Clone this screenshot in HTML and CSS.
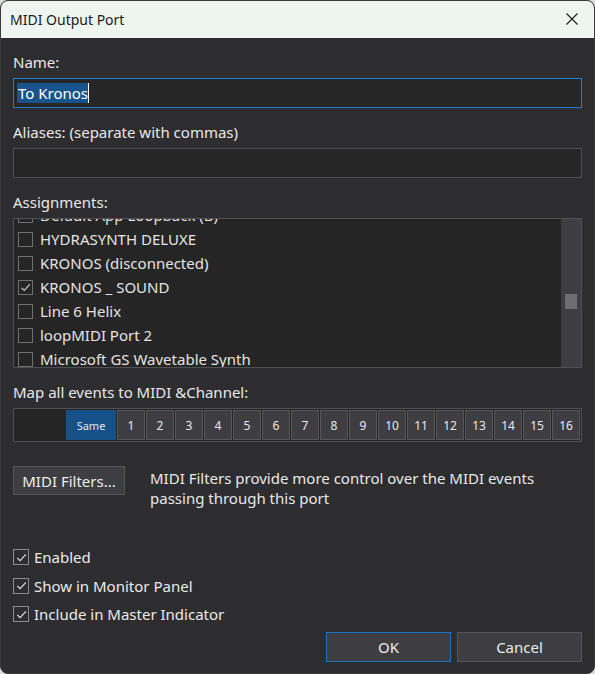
FILE: index.html
```html
<!DOCTYPE html>
<html>
<head>
<meta charset="utf-8">
<link rel="stylesheet" href="styles.css">
</head>
<body>
<div class="window">
  <div class="titlebar">
    <span class="title">MIDI Output Port</span>
    <svg class="close" width="12" height="12" viewBox="0 0 12 12"><path d="M0.5 0.5 L11.5 11.5 M11.5 0.5 L0.5 11.5" stroke="#1a1a1a" stroke-width="1.1" fill="none"/></svg>
  </div>
  <div class="content">
    <div class="label l-name">Name:</div>
    <div class="input focused"><span class="sel">To Kronos</span><span class="caret"></span></div>

    <div class="label l-alias">Aliases: (separate with commas)</div>
    <div class="input"></div>

    <div class="label l-assign">Assignments:</div>
    <div class="listbox">
      <div class="list-view">
        <div class="list-inner">
          <div class="item"><span class="cb"></span>Default App Loopback (B)</div>
          <div class="item"><span class="cb"></span>HYDRASYNTH DELUXE</div>
          <div class="item"><span class="cb"></span>KRONOS (disconnected)</div>
          <div class="item"><span class="cb"><svg width="13" height="13" viewBox="0 0 13 13"><path d="M2.5 6.8 L5.2 9.4 L10.8 3.4" stroke="#d0d0d0" stroke-width="1.1" fill="none"/></svg></span>KRONOS _ SOUND</div>
          <div class="item"><span class="cb"></span>Line 6 Helix</div>
          <div class="item"><span class="cb"></span>loopMIDI Port 2</div>
          <div class="item"><span class="cb"></span>Microsoft GS Wavetable Synth</div>
        </div>
      </div>
      <div class="scrollbar"><div class="thumb"></div></div>
    </div>

    <div class="label l-map">Map all events to MIDI &amp;Channel:</div>
    <div class="strip">
      <div class="spacer"></div>
      <div class="ch same">Same</div>
      <div class="ch">1</div><div class="ch">2</div><div class="ch">3</div><div class="ch">4</div>
      <div class="ch">5</div><div class="ch">6</div><div class="ch">7</div><div class="ch">8</div>
      <div class="ch">9</div><div class="ch">10</div><div class="ch">11</div><div class="ch">12</div>
      <div class="ch">13</div><div class="ch">14</div><div class="ch">15</div><div class="ch">16</div>
    </div>

    <div class="filters">
      <div class="btn filters-btn">MIDI Filters...</div>
      <div class="desc">MIDI Filters provide more control over the MIDI events<br>passing through this port</div>
    </div>

    <div class="checks">
      <div class="check"><span class="cb2"><svg width="13" height="13" viewBox="0 0 13 13"><path d="M2.3 6.8 L5.1 9.6 L10.9 3.3" stroke="#e0e0e0" stroke-width="1.2" fill="none"/></svg></span>Enabled</div>
      <div class="check"><span class="cb2"><svg width="13" height="13" viewBox="0 0 13 13"><path d="M2.3 6.8 L5.1 9.6 L10.9 3.3" stroke="#e0e0e0" stroke-width="1.2" fill="none"/></svg></span>Show in Monitor Panel</div>
      <div class="check"><span class="cb2"><svg width="13" height="13" viewBox="0 0 13 13"><path d="M2.3 6.8 L5.1 9.6 L10.9 3.3" stroke="#e0e0e0" stroke-width="1.2" fill="none"/></svg></span>Include in Master Indicator</div>
    </div>

    <div class="actions">
      <div class="btn ok">OK</div>
      <div class="btn cancel">Cancel</div>
    </div>
  </div>
</div>
</body>
</html>
```

FILE: styles.css
```css
html, body {
  margin: 0;
  padding: 0;
  background: #d8dcda;
}
body {
  width: 595px;
  height: 674px;
  overflow: hidden;
  font-family: "Noto Sans", "Open Sans", sans-serif;
}
.window {
  width: 595px;
  height: 674px;
  background: #2d2d30;
  border-radius: 8px;
  overflow: hidden;
  box-sizing: border-box;
  border: 1px solid #3a3a3c;
  display: flex;
  flex-direction: column;
}
.titlebar {
  height: 37px;
  flex: none;
  background: #eef4f0;
  display: flex;
  align-items: center;
  justify-content: space-between;
  padding: 0 16px 0 9px;
}
.title {
  font-size: 14px;
  color: #1a1a1a;
  margin-top: -1px;
}
.close {
  margin-top: -1px;
}
.content {
  padding: 0 12px 0 12px;
  display: flex;
  flex-direction: column;
  color: #e6e6e6;
  font-size: 15px;
}
.label {
  height: 20px;
  line-height: 20px;
  color: #e8e8e8;
}
.l-name { margin-top: 14px; }
.l-alias { margin-top: 14px; }
.l-assign { margin-top: 14px; }
.l-map { margin-top: 14px; }
.input {
  margin-top: 6px;
  height: 30px;
  box-sizing: border-box;
  border: 1px solid #4e4e52;
  background: #262626;
  display: flex;
  align-items: center;
  padding-left: 3px;
  color: #ffffff;
}
.input.focused {
  border-color: #1a7fd6;
}
.sel {
  background: #17548c;
  height: 20px;
  line-height: 20px;
  padding: 0 0 0 1px;
  color: #ffffff;
}
.caret {
  width: 1px;
  height: 20px;
  background: #ffffff;
}
.listbox {
  margin-top: 6px;
  height: 150px;
  box-sizing: border-box;
  border: 1px solid #505054;
  background: #252526;
  display: flex;
}
.list-view {
  flex: 1;
  overflow: hidden;
}
.list-inner {
  margin-top: -16px;
}
.item {
  height: 24px;
  display: flex;
  align-items: center;
  color: #e4e4e4;
  white-space: nowrap;
}
.cb {
  width: 15px;
  height: 15px;
  box-sizing: border-box;
  border: 1px solid #6e6e72;
  margin: 0 7px 0 4px;
  display: flex;
  align-items: center;
  justify-content: center;
  flex: none;
}
.scrollbar {
  width: 20px;
  background: #3e3e42;
  display: flex;
  justify-content: center;
  padding-top: 75px;
  box-sizing: border-box;
}
.thumb {
  width: 12px;
  height: 15px;
  background: #6e6e72;
}
.strip {
  margin-top: 6px;
  height: 34px;
  box-sizing: border-box;
  border: 1px solid #505054;
  background: #252526;
  display: flex;
  padding: 1px 1px 1px 0;
  gap: 1px;
}
.spacer {
  flex: 1;
}
.ch {
  width: 28px;
  box-sizing: border-box;
  border: 1px solid #55555a;
  background: #3e3e42;
  color: #e8e8e8;
  font-size: 12px;
  display: flex;
  align-items: center;
  justify-content: center;
}
.ch.same {
  width: 50px;
  background: #155089;
  border-color: #155089;
  font-size: 11px;
}
.filters {
  margin-top: 24px;
  display: flex;
  align-items: flex-start;
}
.btn {
  box-sizing: border-box;
  border: 1px solid #55555a;
  background: #3e3e42;
  color: #ececec;
  display: flex;
  align-items: center;
  justify-content: center;
}
.filters-btn {
  width: 112px;
  height: 29px;
  flex: none;
}
.desc {
  margin-left: 25px;
  margin-top: 2px;
  line-height: 20px;
  color: #e8e8e8;
}
.checks {
  margin-top: 35px;
  display: flex;
  flex-direction: column;
}
.check {
  height: 28.5px;
  display: flex;
  align-items: center;
  color: #eaeaea;
}
.cb2 {
  width: 16px;
  height: 16px;
  box-sizing: border-box;
  border: 1px solid #8a8a8e;
  margin: 0 5px 0 0;
  display: flex;
  align-items: center;
  justify-content: center;
}
.actions {
  margin-top: 3px;
  display: flex;
  justify-content: flex-end;
  gap: 6px;
}
.ok, .cancel {
  width: 125px;
  height: 30px;
}
.ok {
  border-color: #1a74c4;
}
```
